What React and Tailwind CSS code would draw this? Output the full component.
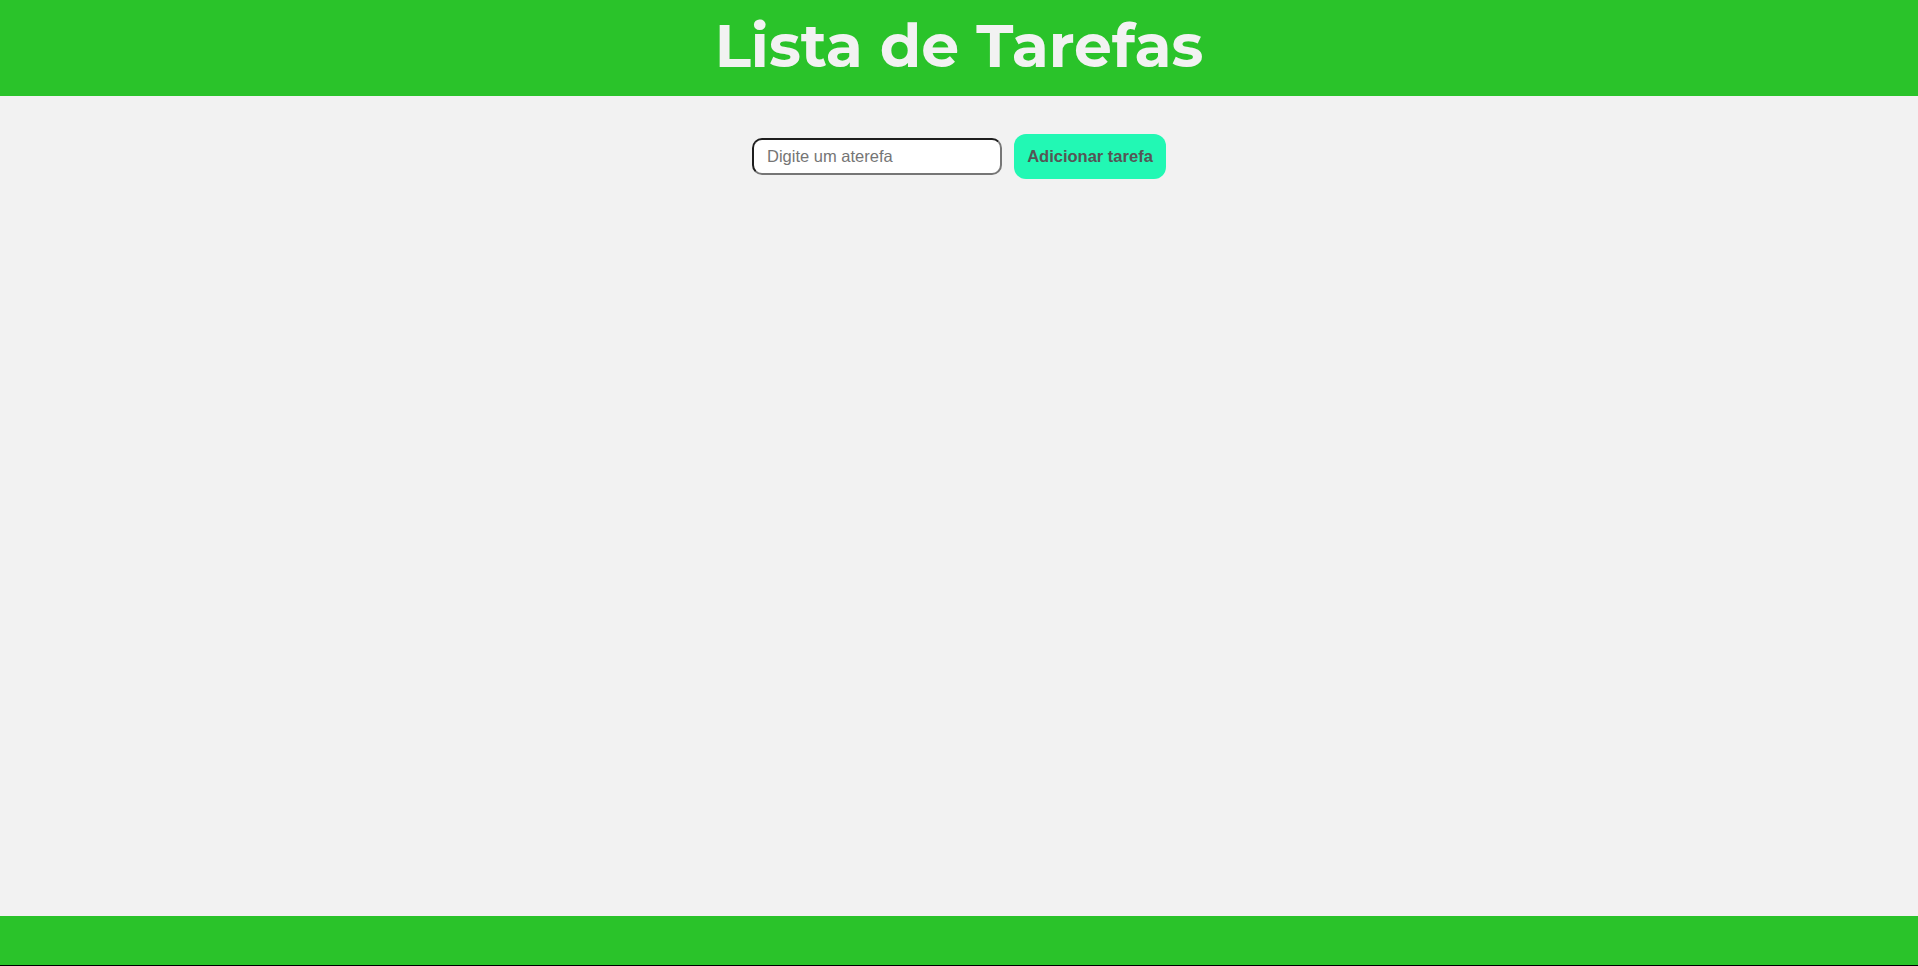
export default function App() {
  return (
    <div className="flex h-[966px] flex-col bg-[#f2f2f2]">
      <header className="flex h-[96px] items-center justify-center bg-[#2ac32a]">
        <h1
          className="text-[60px] font-bold leading-none text-[#f2f2f2] pb-[4px]"
          style={{ fontFamily: '"Montserrat", Inter, "Noto Sans", sans-serif' }}
        >
          Lista de Tarefas
        </h1>
      </header>
      <main className="flex-1">
        <div
          className="flex items-center justify-center gap-[12px] pt-[38px]"
          style={{ fontFamily: '"Liberation Sans", Arial, sans-serif' }}
        >
          <input
            type="text"
            placeholder="Digite um aterefa"
            className="h-[37px] w-[250px] rounded-[10px] border-2 border-t-[#1e1e1e] border-l-[#1e1e1e] border-r-[#767676] border-b-[#767676] bg-white px-[13px] text-[16.5px] text-black placeholder:text-[#757575] outline-none"
          />
          <button className="h-[45px] w-[152px] rounded-[12px] bg-[#22f8b4] text-[16.5px] font-bold text-[#555555]">
            Adicionar tarefa
          </button>
        </div>
      </main>
      <footer className="h-[50px] border-b border-black bg-[#2ac32a]"></footer>
    </div>
  );
}
